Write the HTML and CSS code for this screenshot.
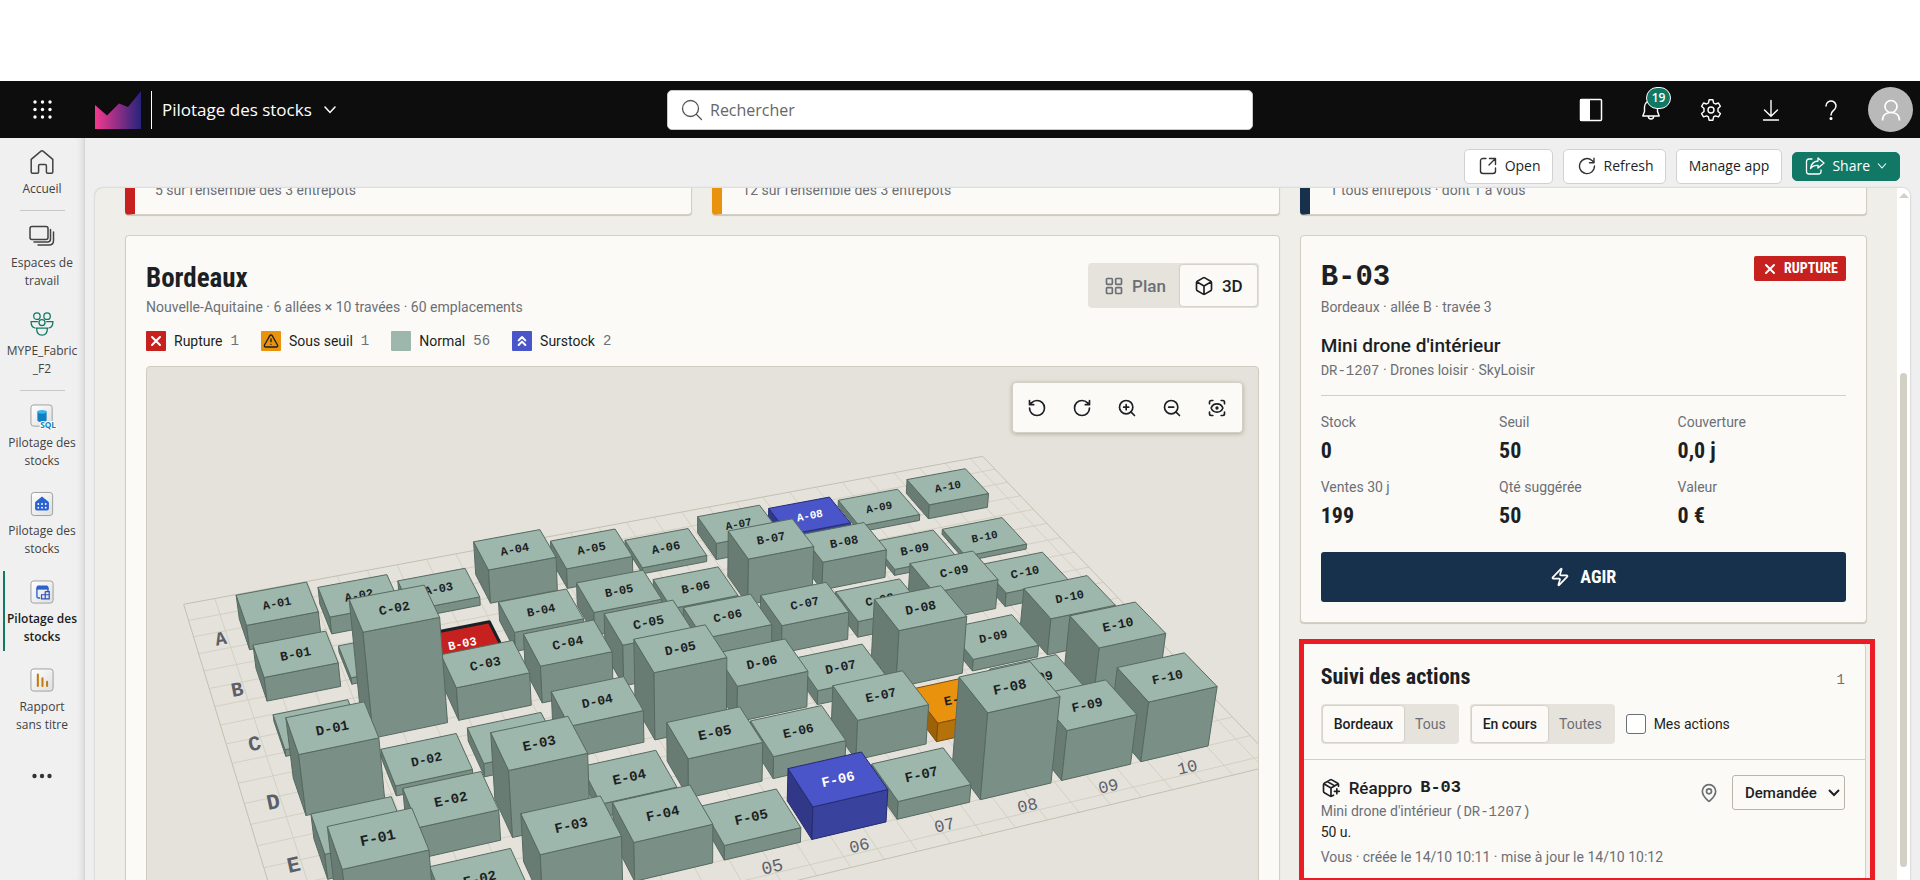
FILE: index.html
```html
<!DOCTYPE html>
<html lang="fr">
<head>
<meta charset="utf-8">
<title>Pilotage des stocks</title>
<link rel="stylesheet" href="styles.css">
</head>
<body>
<svg class="defs" aria-hidden="true">
  <defs>
    <linearGradient id="brand" x1="0" x2="1" y1="0" y2="0"><stop offset="0" stop-color="#f5398f"/><stop offset="1" stop-color="#26237c"/></linearGradient>
    <linearGradient id="tile" x1="0" x2="1" y1="0" y2="1"><stop offset="0" stop-color="#fff"/><stop offset="1" stop-color="#dedede"/></linearGradient>
  </defs>
</svg>
<header class="topbar">
  <button class="icon-btn waffle" aria-label="Applications">
    <svg width="20" height="20" viewBox="0 0 20 20" fill="#fff"><circle cx="2" cy="2" r="1.7"/><circle cx="9.5" cy="2" r="1.7"/><circle cx="17" cy="2" r="1.7"/><circle cx="2" cy="9.5" r="1.7"/><circle cx="9.5" cy="9.5" r="1.7"/><circle cx="17" cy="9.5" r="1.7"/><circle cx="2" cy="17" r="1.7"/><circle cx="9.5" cy="17" r="1.7"/><circle cx="17" cy="17" r="1.7"/></svg>
  </button>
  <svg class="brand" width="46" height="38" viewBox="0 0 46 38"><path fill="url(#brand)" d="M0 14 12 24.500 24 12.500 33 16 46 0V38H0Z"/></svg>
  <button class="app-name">Pilotage des stocks
    <svg width="12" height="8" viewBox="0 0 12 8" fill="none" stroke="#fff" stroke-width="1.500" stroke-linecap="round"><path d="m1 1 5 5.500L11 1"/></svg>
  </button>
  <label class="search">
    <svg width="22" height="22" viewBox="0 0 22 22" fill="none" stroke="#555" stroke-width="1.300" stroke-linecap="round"><circle cx="9.500" cy="9.500" r="8"/><path d="m15.500 15.500 5 5"/></svg>
    <input type="search" placeholder="Rechercher" aria-label="Rechercher">
  </label>
  <nav class="top-actions" aria-label="Outils">
    <button class="icon-btn" aria-label="Volet"><svg width="24" height="24" viewBox="0 0 24 24"><rect x="1.500" y="1.500" width="21" height="21" rx="1" fill="none" stroke="#fff" stroke-width="1.500"/><path fill="#fff" d="M1 1h10v22H1z"/></svg></button>
    <button class="icon-btn bell" aria-label="Notifications"><svg width="24" height="24" viewBox="0 0 24 24" fill="none" stroke="#fff" stroke-width="1.400" stroke-linejoin="round"><path d="M12 2.500a6.500 6.500 0 0 0-6.500 6.500v4.500L3.800 18h16.400l-1.700-4.500V9A6.500 6.500 0 0 0 12 2.500ZM9.300 18.300a2.700 2.700 0 0 0 5.400 0"/></svg><span class="count">19</span></button>
    <button class="icon-btn" aria-label="Paramètres"><svg width="24" height="24" viewBox="0 0 24 24" fill="none" stroke="#fff" stroke-width="1.400" stroke-linejoin="round"><circle cx="12" cy="12" r="3"/><path d="M10.100 1.800h3.800l.7 3.200 1.800 1 3.100-1 1.900 3.300-2.400 2.200v2.900l2.400 2.200-1.900 3.300-3.100-1-1.800 1-.7 3.300h-3.800l-.7-3.300-1.800-1-3.100 1-1.900-3.300L5 13.400v-2.900L2.600 8.300 4.500 5l3.100 1 1.800-1z"/></svg></button>
    <button class="icon-btn" aria-label="Télécharger"><svg width="24" height="24" viewBox="0 0 24 24" fill="none" stroke="#fff" stroke-width="1.400" stroke-linecap="round"><path d="M12 2.500v15.500M5.500 12l6.500 6.300 6.500-6.300M4.500 22h15"/></svg></button>
    <button class="icon-btn" aria-label="Aide"><svg width="24" height="24" viewBox="0 0 24 24" fill="none" stroke="#fff" stroke-width="1.500" stroke-linecap="round"><path d="M7 8a5 5 0 1 1 8.700 3.300C14 13 12 13.700 12 17"/><circle cx="12" cy="20.500" r=".8" fill="#fff"/></svg></button>
    <button class="avatar" aria-label="Compte"><svg width="24" height="24" viewBox="0 0 24 24" fill="none" stroke="#fff" stroke-width="1.700"><circle cx="12" cy="8.500" r="6"/><path d="M3.500 22.500c0-5.500 4-8 8.500-8s8.500 2.500 8.500 8"/></svg></button>
  </nav>
</header>
<div class="shell">
  <nav class="rail" aria-label="Navigation">
    <a href="#" class="rail-item"><svg width="24" height="24" viewBox="0 0 24 24" fill="none" stroke="#424242" stroke-width="1.500" stroke-linejoin="round"><path d="M1.200 9.300 11 1.200q1-.8 2 0l9.800 8.100V22q0 1.200-1.200 1.200h-4q-1.200 0-1.200-1.200v-6.300q0-1.200-1.200-1.200H9.800q-1.200 0-1.200 1.200V22q0 1.200-1.200 1.200h-5Q1.200 23.200 1.200 22Z"/></svg><span>Accueil</span></a>
    <hr>
    <a href="#" class="rail-item"><svg width="26" height="24" viewBox="0 0 26 24" fill="none" stroke="#424242" stroke-width="1.500" stroke-linecap="round"><rect x="1" y="2.500" width="18" height="13" rx="2"/><path d="M21.500 5.500V15q0 3-3 3H5M24.500 8v8.500q0 4.500-4.500 4.500H9"/></svg><span>Espaces de travail</span></a>
    <a href="#" class="rail-item"><svg width="26" height="26" viewBox="0 0 26 26" fill="none" stroke="#117865" stroke-width="1.400"><circle cx="7.500" cy="4.500" r="3.500"/><circle cx="18.500" cy="4.500" r="3.500"/><circle cx="13" cy="11.500" r="3.300"/><path d="M8.500 10.500H1.200c0 4 1.600 6.500 4.800 7M17.500 10.500h7.300c0 4-1.600 6.500-4.800 7M7.200 17.500h11.600c0 4.500-2.200 7.500-5.800 7.500s-5.800-3-5.800-7.500Z"/></svg><span>MYPE_Fabric _F2</span></a>
    <hr>
    <a href="#" class="rail-item"><svg width="28" height="26" viewBox="0 0 28 26"><rect x="2" y="1" width="23" height="23" rx="3" fill="url(#tile)" stroke="#9a9a9a"/><path fill="#0f7fc2" d="M9 8v9.500c0 2.700 10 2.700 10 0V8Z"/><ellipse cx="14" cy="8.500" rx="5" ry="2" fill="#35b5ea"/><text x="12" y="26" class="sql">SQL</text></svg><span>Pilotage des stocks</span></a>
    <a href="#" class="rail-item"><svg width="26" height="26" viewBox="0 0 26 26"><rect x="1.500" y=".5" width="23" height="25" rx="3" fill="url(#tile)" stroke="#9a9a9a"/><path fill="#2a62cf" d="m13 5 7 5.500q.5.500.5 1.500v6q0 2-2 2h-11q-2 0-2-2v-6q0-1 .5-1.500Z"/><g fill="#fff"><circle cx="9" cy="13" r="1"/><circle cx="13" cy="13" r="1"/><circle cx="17" cy="13" r="1"/><circle cx="9" cy="17" r="1"/><circle cx="13" cy="17" r="1"/><circle cx="17" cy="17" r="1"/></g></svg><span>Pilotage des stocks</span></a>
    <a href="#" class="rail-item current" aria-current="page"><svg width="26" height="26" viewBox="0 0 26 26" fill="none"><rect x="1" y="1" width="24" height="24" rx="3" fill="url(#tile)" stroke="#9a9a9a"/><path stroke="#2a62cf" stroke-width="1.500" d="M11 19.500H9q-1.500 0-1.500-1.500V9.500h12V12"/><path fill="#2a62cf" d="M7 10V8q0-2 2-2h9q2 0 2 2v2Z"/><path stroke="#2a52b8" stroke-width="1.300" d="M12.500 16h8.300v4.500h-8.300ZM16.500 12.500h4.300V16M16.500 12.500v8"/></svg><span>Pilotage des stocks</span></a>
    <a href="#" class="rail-item"><svg width="26" height="26" viewBox="0 0 26 26" fill="none"><rect x="1" y="1" width="24" height="24" rx="3" fill="url(#tile)" stroke="#9a9a9a"/><path stroke="#c27a0c" stroke-width="2.200" stroke-linecap="round" d="M8.500 7v12.500M13.500 11v8.500M18.500 15v4.500"/></svg><span class="narrow">Rapport sans titre</span></a>
    <button class="rail-more" aria-label="Plus"><svg width="20" height="6" viewBox="0 0 20 6" fill="#333"><circle cx="2.500" cy="3" r="2.200"/><circle cx="10" cy="3" r="2.200"/><circle cx="17.500" cy="3" r="2.200"/></svg></button>
  </nav>
  <div class="workspace">
    <div class="commands">
      <button class="cmd"><svg width="18" height="18" viewBox="0 0 18 18" fill="none" stroke="#333" stroke-width="1.400" stroke-linecap="round" stroke-linejoin="round"><path d="M7 1.500H4Q1.500 1.500 1.500 4v10q0 2.500 2.500 2.500h10q2.500 0 2.500-2.500v-3M10.500 1.500h6v6M16.500 1.500 10 8"/></svg>Open</button>
      <button class="cmd"><svg width="18" height="18" viewBox="0 0 18 18" fill="none" stroke="#333" stroke-width="1.400" stroke-linecap="round" stroke-linejoin="round"><path d="M16.500 9A7.500 7.500 0 1 1 14 3.500l2 2M16 1.200v4.500h-4.500"/></svg>Refresh</button>
      <button class="cmd">Manage app</button>
      <button class="cmd share"><svg width="20" height="18" viewBox="0 0 20 18" fill="none" stroke="#fff" stroke-width="1.300" stroke-linecap="round" stroke-linejoin="round"><path d="M7 2H4Q1.500 2 1.500 4.500v10Q1.500 17 4 17h9.500q2.500 0 2.500-2.500V13M13 1l6 5-6 5V8.300Q8 8 5.500 11.500 6.500 4.500 13 4Z"/></svg>Share<svg width="10" height="6" viewBox="0 0 10 6" fill="none" stroke="#fff" stroke-width="1.100"><path d="m1 .5 4 4.500L9 .5"/></svg></button>
    </div>
    <div class="frame">
      <main class="page">
        <section class="stats">
          <p class="card stat stat-red">5 sur l'ensemble des 3 entrepôts</p>
          <p class="card stat stat-amber">12 sur l'ensemble des 3 entrepôts</p>
          <p class="card stat stat-navy">1 tous entrepôts · dont 1 à vous</p>
        </section>
        <section class="board">
          <article class="card site">
            <header class="site-head">
              <div>
                <h2>Bordeaux</h2>
                <p class="muted">Nouvelle-Aquitaine · 6 allées × 10 travées · 60 emplacements</p>
              </div>
              <div class="segmented large">
                <button><svg class="lucide" viewBox="0 0 24 24"><rect x="3" y="3" width="7" height="7" rx="1"/><rect x="14" y="3" width="7" height="7" rx="1"/><rect x="14" y="14" width="7" height="7" rx="1"/><rect x="3" y="14" width="7" height="7" rx="1"/></svg>Plan</button>
                <button class="on" aria-pressed="true"><svg class="lucide" viewBox="0 0 24 24"><path d="M21 8a2 2 0 0 0-1-1.730l-7-4a2 2 0 0 0-2 0l-7 4A2 2 0 0 0 3 8v8a2 2 0 0 0 1 1.730l7 4a2 2 0 0 0 2 0l7-4A2 2 0 0 0 21 16ZM3.300 7l8.700 5 8.700-5M12 22V12"/></svg>3D</button>
              </div>
            </header>
            <ul class="legend">
              <li><i class="chip red"><svg class="lucide" viewBox="0 0 24 24"><path d="M18 6 6 18M6 6l12 12"/></svg></i>Rupture <b>1</b></li>
              <li><i class="chip amber"><svg class="lucide" viewBox="0 0 24 24"><path d="m21.730 18-8-14a2 2 0 0 0-3.480 0l-8 14A2 2 0 0 0 4 21h16a2 2 0 0 0 1.730-3ZM12 9v4M12 17h.01"/></svg></i>Sous seuil <b>1</b></li>
              <li><i class="chip sage"></i>Normal <b>56</b></li>
              <li><i class="chip blue"><svg class="lucide" viewBox="0 0 24 24"><path d="m17 11-5-5-5 5M17 18l-5-5-5 5"/></svg></i>Surstock <b>2</b></li>
            </ul>
            <div class="scene">
              <svg id="warehouse" viewBox="147 367 1112 620" preserveAspectRatio="xMidYMin slice" role="img" aria-label="Vue 3D de l'entrepôt de Bordeaux"></svg>
              <div class="scene-tools">
                <button aria-label="Pivoter à gauche"><svg class="lucide" viewBox="0 0 24 24"><path d="M3 12a9 9 0 1 0 9-9 9.750 9.750 0 0 0-6.740 2.740L3 8M3 3v5h5"/></svg></button>
                <button aria-label="Pivoter à droite"><svg class="lucide" viewBox="0 0 24 24"><path d="M21 12a9 9 0 1 1-9-9c2.520 0 4.930 1 6.740 2.740L21 8M21 3v5h-5"/></svg></button>
                <button aria-label="Zoom avant"><svg class="lucide" viewBox="0 0 24 24"><circle cx="11" cy="11" r="8"/><path d="m21 21-4.350-4.350M11 8v6M8 11h6"/></svg></button>
                <button aria-label="Zoom arrière"><svg class="lucide" viewBox="0 0 24 24"><circle cx="11" cy="11" r="8"/><path d="m21 21-4.350-4.350M8 11h6"/></svg></button>
                <button aria-label="Recentrer"><svg class="lucide" viewBox="0 0 24 24"><path d="M3 7V5a2 2 0 0 1 2-2h2M17 3h2a2 2 0 0 1 2 2v2M21 17v2a2 2 0 0 1-2 2h-2M7 21H5a2 2 0 0 1-2-2v-2"/><circle cx="12" cy="12" r="1"/><path d="M18.940 12.330a1 1 0 0 0 0-.660 7.500 7.500 0 0 0-13.880 0 1 1 0 0 0 0 .660 7.500 7.500 0 0 0 13.880 0"/></svg></button>
              </div>
            </div>
          </article>
          <aside class="side">
            <article class="card detail">
              <header class="detail-head">
                <h2 class="slot">B-03</h2>
                <span class="tag"><svg class="lucide" viewBox="0 0 24 24"><path d="M18 6 6 18M6 6l12 12"/></svg>RUPTURE</span>
              </header>
              <p class="muted">Bordeaux · allée B · travée 3</p>
              <h3>Mini drone d'intérieur</h3>
              <p class="muted"><span class="mono">DR-1207</span> · Drones loisir · SkyLoisir</p>
              <hr>
              <dl class="facts">
                <div><dt>Stock</dt><dd>0</dd></div>
                <div><dt>Seuil</dt><dd>50</dd></div>
                <div><dt>Couverture</dt><dd>0,0 j</dd></div>
                <div><dt>Ventes 30 j</dt><dd>199</dd></div>
                <div><dt>Qté suggérée</dt><dd>50</dd></div>
                <div><dt>Valeur</dt><dd>0 €</dd></div>
              </dl>
              <button class="primary"><svg class="lucide" viewBox="0 0 24 24"><path d="M4 14a1 1 0 0 1-.780-1.630l9.900-10.200a.5.5 0 0 1 .860.460l-1.920 6.020A1 1 0 0 0 13 10h7a1 1 0 0 1 .780 1.630l-9.900 10.200a.5.5 0 0 1-.860-.460l1.920-6.020A1 1 0 0 0 11 14z"/></svg>AGIR</button>
            </article>
            <div class="callout">
              <article class="actions">
                <header class="actions-head">
                  <h3>Suivi des actions</h3><span class="total mono">1</span>
                </header>
                <div class="filters">
                  <div class="segmented"><button class="on" aria-pressed="true">Bordeaux</button><button>Tous</button></div>
                  <div class="segmented"><button class="on" aria-pressed="true">En cours</button><button>Toutes</button></div>
                  <label class="mine"><input type="checkbox">Mes actions</label>
                </div>
                <div class="action">
                  <div class="action-text">
                    <h4><svg class="lucide" viewBox="0 0 24 24"><path d="M16 16h6M19 13v6M21 10V8a2 2 0 0 0-1-1.730l-7-4a2 2 0 0 0-2 0l-7 4A2 2 0 0 0 3 8v8a2 2 0 0 0 1 1.730l7 4a2 2 0 0 0 2 0l2-1.140M7.500 4.270l9 5.150M3.290 7 12 12l8.710-5M12 22V12"/></svg>Réappro <span class="mono">B-03</span></h4>
                    <p class="muted">Mini drone d'intérieur <span class="mono">(DR-1207)</span></p>
                    <p>50 u.</p>
                    <p class="muted when">Vous · créée le 14/10 10:11 · mise à jour le 14/10 10:12</p>
                  </div>
                  <button class="pin" aria-label="Localiser"><svg class="lucide" viewBox="0 0 24 24"><path d="M20 10c0 5-5.540 10.190-7.400 11.800a1 1 0 0 1-1.200 0C9.540 20.190 4 15 4 10a8 8 0 0 1 16 0"/><circle cx="12" cy="10" r="3"/></svg></button>
                  <div class="status">
                    <select aria-label="Statut"><option>Demandée</option></select>
                    <svg width="12" height="8" viewBox="0 0 12 8" fill="none" stroke="#1c1f24" stroke-width="2"><path d="m1 1 5 5 5-5"/></svg>
                  </div>
                </div>
              </article>
            </div>
          </aside>
        </section>
      </main>
      <div class="scrollbar" aria-hidden="true"><i class="arrow"></i><i class="thumb"></i></div>
    </div>
  </div>
</div>
<script src="scene.js"></script>
</body>
</html>
```

FILE: styles.css
```css
* { box-sizing: border-box; }
body {
  margin: 0;
  height: 100vh;
  padding-top: 81px;
  display: flex;
  flex-direction: column;
  overflow: hidden;
  background: #fff;
  color: #1c1f24;
  font: 14px/20px Roboto, "Liberation Sans", sans-serif;
}
h2, h3, h4, p, ul, dl, dd { margin: 0; padding: 0; }
button, input, select { font: inherit; color: inherit; }
button { border: 0; background: none; padding: 0; cursor: pointer; }
.defs { position: absolute; width: 0; height: 0; }
.lucide { width: 20px; height: 20px; fill: none; stroke: currentColor; stroke-width: 2; stroke-linecap: round; stroke-linejoin: round; flex: none; }
.mono { font-family: "Liberation Mono", monospace; }
.muted { color: #6b6f76; }

.topbar { height: 57px; flex: none; display: flex; align-items: center; background: #0d0d0d; color: #fff; font-family: "Open Sans", "Noto Sans", sans-serif; }
.icon-btn { display: grid; place-items: center; width: 60px; height: 57px; position: relative; }
.waffle { width: 85px; }
.brand { margin-left: 10px; }
.app-name { display: flex; align-items: center; gap: 12px; height: 38px; margin-left: 10px; padding-left: 10px; border-left: 1px solid #fff; font-size: 17px; white-space: nowrap; }
.search { display: flex; align-items: center; gap: 5px; width: 586px; height: 40px; margin: 0 auto; padding: 0 13px; background: #fff; border: 1px solid #c8c8c8; border-radius: 5px; position: absolute; left: 50%; translate: -50% 0; }
.search input { flex: 1; min-width: 0; border: 0; outline: 0; font-size: 16px; color: #333; background: none; }
.search input::placeholder { color: #666; opacity: 1; }
.top-actions { display: flex; align-items: center; margin-left: auto; padding-right: 7px; }
.count { position: absolute; left: 25px; top: 6px; width: 25px; height: 22px; border: 1px solid #fff; border-radius: 11px; background: #117865; font-size: 12px; font-weight: 600; line-height: 20px; text-align: center; }
.avatar { display: grid; place-items: center; width: 45px; height: 45px; margin-left: 7px; border-radius: 50%; background: #b9b9b9; }

.shell { flex: 1; min-height: 0; display: flex; background: #efefef; }
.rail { width: 85px; flex: none; display: flex; flex-direction: column; align-items: center; gap: 3px; padding-top: 2px; background: #f0f0f0; border-right: 1px solid #d5d5d5; box-shadow: inset -7px 0 6px -5px #d8d8d8; font: 12px/18px "Open Sans", "Noto Sans", sans-serif; color: #424242; }
.rail hr { width: 45px; margin: 0; border: 0; border-top: 1px solid #c8c8c8; }
.rail-item { width: 100%; display: flex; flex-direction: column; align-items: center; gap: 6px; padding: 10px 3px 9px; text-align: center; color: inherit; text-decoration: none; }
.rail-item svg { height: 24px; overflow: visible; }
.rail-item span { width: 76px; }
.rail-item .narrow { width: 60px; }
.current { position: relative; color: #1b1b1b; font-weight: 600; }
.current::before { content: ""; position: absolute; left: 3px; top: 1px; bottom: 4px; width: 2px; background: #117865; }
.sql { font: bold 9px "Open Sans", sans-serif; fill: #0f7fc2; paint-order: stroke; stroke: #fff; stroke-width: 2px; }
.rail-more { padding: 26px 0; line-height: 6px; }

.workspace { flex: 1; min-width: 0; display: flex; flex-direction: column; padding: 0 10px 0 10px; }
.commands { height: 50px; flex: none; display: flex; justify-content: flex-end; align-items: center; gap: 10px; padding: 6px 10px 0 0; font: 14px/20px "Open Sans", "Noto Sans", sans-serif; }
.cmd { display: flex; align-items: center; gap: 8px; height: 35px; padding: 0 11px 0 14px; background: #fff; border: 1px solid #d1d1d1; border-radius: 5px; white-space: nowrap; }
.cmd:nth-child(3) { padding: 0 12px; }
.share { height: 29px; gap: 7px; padding: 0 12px; background: #117865; border-color: #117865; color: #fff; }

.frame { flex: 1; min-height: 0; display: flex; overflow: hidden; background: #efeee9; border-radius: 8px 8px 0 0; box-shadow: 0 0 2px #aaa; }
.page { flex: 1; min-width: 0; padding: 0 30px; overflow: hidden; }
.scrollbar { width: 13px; flex: none; display: flex; flex-direction: column; align-items: center; background: #fff; }
.arrow { margin-top: 5px; border: 5px solid transparent; border-top: 0; border-bottom: 5px solid #d2cfc4; }
.thumb { width: 7px; flex: 1; margin: 175px 0 13px; border-radius: 4px; background: #d2cfc4; }

.card { background: #fbfaf6; border: 1px solid #d2cfc4; border-radius: 4px; box-shadow: 0 1px 1px #c9c6bb; }
.stats { display: grid; grid-template-columns: repeat(3, 1fr); gap: 20px; margin: -36px 0 20px; }
.stat { padding: 27px 20px 14px; border-left-width: 10px; color: #6b6f76; }
.stat-red { border-left-color: #c7211f; }
.stat-amber { border-left-color: #e9920d; }
.stat-navy { border-left-color: #17314c; }

.board { display: grid; grid-template-columns: repeat(3, 1fr); gap: 20px; align-items: start; }
.site { grid-column: span 2; padding: 20px; }
.site-head { display: flex; justify-content: space-between; align-items: center; }
h2 { font: bold 27px/36px "Liberation Sans Narrow", "Roboto Condensed", Roboto, sans-serif; }
.site h2 { padding-top: 4px; margin-bottom: 1px; }
.segmented { display: flex; padding: 2px; background: #e5e3db; border-radius: 4px; color: #6b6f76; }
.segmented button { padding: 0 11px; height: 36px; border-radius: 3px; }
.segmented .on { background: #fbfaf6; color: #1c1f24; box-shadow: 0 0 2px #a8a59a; }
.large { margin-bottom: 2px; font-size: 17px; font-weight: 500; }
.large button { display: flex; align-items: center; gap: 8px; height: 41px; padding: 0 14px; }
.legend { display: flex; gap: 22px; margin: 14px 0 15px; list-style: none; }
.legend li { display: flex; align-items: center; gap: 8px; }
.legend b { font: 14px/20px "Liberation Mono", monospace; color: #6b6f76; }
.chip { display: grid; place-items: center; width: 20px; height: 20px; border-radius: 1px; color: #fff; }
.chip .lucide { width: 16px; height: 16px; stroke-width: 3; }
.red { background: #c7211f; }
.amber { background: #e9920d; color: #1c1f24; }
.amber .lucide { stroke-width: 2; }
.sage { background: #9db7ac; }
.blue { background: #4955c8; }

.scene { position: relative; border: 1px solid #cfccbf; border-radius: 4px; overflow: hidden; background: #e5e2db; }
#warehouse { display: block; width: 100%; height: 620px; }
.scene-tools { position: absolute; top: 15px; right: 15px; display: flex; padding: 2px; background: #fbfaf6; border: 1px solid #d2cfc4; border-radius: 4px; box-shadow: 0 1px 4px #b0ada2; }
.scene-tools button { display: grid; place-items: center; width: 45px; height: 45px; }
.box { stroke-width: 1; stroke-linejoin: round; }
.selected { stroke-width: 3; }
.slot-name { font-family: "Liberation Mono", monospace; font-weight: bold; text-anchor: middle; dominant-baseline: central; }
.axis { font-family: "Liberation Mono", monospace; fill: #5b5f68; text-anchor: middle; dominant-baseline: central; }
.aisle { font-weight: bold; }
.grid { fill: none; stroke: #d3d0c2; stroke-width: 1; }
.edge { fill: none; stroke: #c3c0b1; stroke-width: 1; }

.side { display: flex; flex-direction: column; gap: 16px; }
.detail { padding: 20px; }
.detail-head { display: flex; justify-content: space-between; align-items: flex-start; }
.slot { padding-top: 3px; font: bold 29px/38px "Liberation Mono", monospace; }
.tag { display: flex; align-items: center; gap: 6px; height: 25px; padding: 0 8px; border-radius: 2px; background: #c7211f; color: #fff; font: bold 14px/25px "Liberation Sans Narrow", "Roboto Condensed", sans-serif; }
.tag .lucide { width: 16px; height: 16px; stroke-width: 3; }
.detail h3 { margin: 17px 0 2px; font: 500 19px/24px Roboto, sans-serif; }
.detail hr { margin: 14px 0 16px; border: 0; border-top: 1px solid #d2cfc4; }
.facts { display: grid; grid-template-columns: repeat(3, 1fr); gap: 10px; }
.facts dt { color: #6b6f76; }
.facts dd { padding-top: 3px; font: bold 22px/32px "Liberation Sans Narrow", "Roboto Condensed", sans-serif; }
.primary { display: flex; justify-content: center; align-items: center; gap: 10px; width: 100%; height: 50px; margin-top: 20px; border-radius: 3px; background: #17314c; color: #fff; font: bold 18px/24px "Liberation Sans Narrow", "Roboto Condensed", sans-serif; }

.callout { border: 5px solid #ec1c24; margin: 0 -8px 0 -1px; padding-right: 4px; }
.actions { background: #fbfaf6; border-right: 1px solid #d2cfc4; border-radius: 0 4px 0 0; }
.actions-head { display: flex; justify-content: space-between; align-items: center; padding: 18px 20px 0 17px; }
.actions-head h3 { font: bold 22px/30px "Liberation Sans Narrow", "Roboto Condensed", sans-serif; }
.total { padding-top: 6px; color: #6b6f76; }
.filters { display: flex; align-items: center; gap: 11px; padding: 12px 17px 15px; border-bottom: 1px solid #d2cfc4; }
.filters .segmented .on { font-weight: 500; }
.mine { display: flex; align-items: center; gap: 8px; }
.mine input { appearance: none; width: 20px; height: 20px; margin: 0; border: 1px solid #6b6f76; border-radius: 3px; background: #fff; }
.action { display: flex; align-items: flex-start; padding: 15px 20px 11px 17px; }
.action-text { flex: 1; }
.action h4 { display: flex; align-items: center; gap: 8px; font: 500 17px/26px Roboto, sans-serif; }
.action h4 .mono { font-weight: bold; }
.action .when { margin-top: 5px; }
.pin { padding: 8px 13px; color: #6b6f76; line-height: 0; }
.status { position: relative; }
.status select { appearance: none; width: 113px; height: 35px; padding: 0 12px; border: 1px solid #b9b6a9; border-radius: 3px; background: #fbfaf6; font-size: 15px; font-weight: 500; }
.status svg { position: absolute; right: 5px; top: 14px; pointer-events: none; }
```

FILE: scene.js
```js
// Pinhole camera: the floor spans u, v in 0..1 and z rises towards the viewer.
const CAMERA = { a: 915.8, b: 54.8, c: 184.3, d: -93.8, e: 180, f: 604.3, g: 0.1188, h: -0.2154 };
const UP = { k: 1 / 3400, x: 702, y: 4100 };

function project(u, v, z = 0) {
  const w = 1 + CAMERA.g * u + CAMERA.h * v - UP.k * z;
  return [
    (CAMERA.a * u + CAMERA.b * v + CAMERA.c - UP.k * UP.x * z) / w,
    (CAMERA.d * u + CAMERA.e * v + CAMERA.f - UP.k * UP.y * z) / w,
    w,
  ];
}

// Stack height of each bay, one row per aisle.
const HEIGHTS = {
  A: [23, 16, 8, 32, 19, 6, 16, 11, 6, 14],
  B: [22, 6, 1, 18, 22, 11, 44, 27, 6, 5],
  C: [6, 95, 30, 34, 38, 29, 26, 15, 28, 13],
  D: [54, 9, 12, 29, 61, 33, 13, 53, 11, 34],
  E: [22, 27, 59, 12, 35, 20, 36, 17, 20, 54],
  F: [67, 14, 42, 34, 13, 29, 16, 77, 45, 54],
};
const STATES = { 'B-03': 'rupture', 'E-08': 'low', 'A-08': 'over', 'F-06': 'over' };
const COLOURS = {
  normal: { top: '#9db7ac', front: '#7a8f86', left: '#697c74', line: '#566a61', ink: '#1c1f24' },
  rupture: { top: '#c7211f', front: '#9a1a18', left: '#861614', line: '#1c1f24', ink: '#fff' },
  low: { top: '#e9920d', front: '#b5710a', left: '#9d6208', line: '#7d4e06', ink: '#1c1f24' },
  over: { top: '#4955c8', front: '#39429c', left: '#303887', line: '#262c70', ink: '#fff' },
};
const SELECTED = 'B-03';
const FIRST_U = 0.0536, STEP_U = 0.0908, WIDTH = 0.0788;
const FIRST_V = 0.1705, STEP_V = 0.1507, DEPTH = 0.0945;

const svg = document.getElementById('warehouse');
function add(name, attrs, text) {
  const node = document.createElementNS('http://www.w3.org/2000/svg', name);
  for (const key in attrs) node.setAttribute(key, attrs[key]);
  if (text) node.textContent = text;
  svg.append(node);
}
const path = (...points) => 'M' + points.map(([x, y]) => `${x.toFixed(1)} ${y.toFixed(1)}`).join('L');

function label(cls, text, u, v, z, size, fill) {
  const [x, y, w] = project(u, v, z);
  const [x2, y2] = project(u + 0.02, v, z);
  const angle = Math.atan2(y2 - y, x2 - x) * 180 / Math.PI;
  const attrs = { class: cls, 'font-size': Math.round(size / w), transform: `translate(${x.toFixed(1)} ${y.toFixed(1)}) rotate(${angle.toFixed(1)})` };
  if (fill) attrs.fill = fill;
  add('text', attrs, text);
}

let lines = '';
for (let u = 0.0351; u < 1; u += 0.0351) lines += path(project(u, 0), project(u, 1));
for (let v = 0.0513; v < 1; v += 0.0513) lines += path(project(0, v), project(1, v));
add('path', { class: 'grid', d: lines });
add('path', { class: 'edge', d: path(project(0, 0), project(1, 0), project(1, 1), project(0, 1)) + 'Z' });

Object.keys(HEIGHTS).forEach((row, j) => {
  const front = FIRST_V + j * STEP_V, back = front - DEPTH;
  label('axis aisle', row, 0.0273, front - DEPTH / 2 + 0.003, 0, 19);
  for (let i = 9; i >= 0; i--) {
    const z = HEIGHTS[row][i];
    const name = `${row}-${String(i + 1).padStart(2, '0')}`;
    const left = FIRST_U + i * STEP_U, right = left + WIDTH;
    const c = COLOURS[STATES[name] || 'normal'];
    const fl = project(left, front, z), fr = project(right, front, z);
    const bl = project(left, back, z), br = project(right, back, z);
    add('path', { class: 'box', fill: c.left, stroke: c.line, d: path(bl, fl, project(left, front), project(left, back)) + 'Z' });
    add('path', { class: 'box', fill: c.front, stroke: c.line, d: path(fl, fr, project(right, front), project(left, front)) + 'Z' });
    add('path', { class: name === SELECTED ? 'box selected' : 'box', fill: c.top, stroke: c.line, d: path(bl, br, fr, fl) + 'Z' });
    if (name === SELECTED) {
      const m = (du, dv) => project(left + WIDTH * du, back + DEPTH * dv, z);
      add('path', { fill: '#fff', d: path(m(0.4, 0.75), m(0.6, 0.75), m(0.6, 0.85), m(0.4, 0.85)) + 'Z' });
    }
    label('slot-name', name, left + WIDTH / 2, back + DEPTH * 0.52, z, 12, c.ink);
  }
});
for (let i = 0; i < 10; i++) {
  label('axis', String(i + 1).padStart(2, '0'), FIRST_U + i * STEP_U + WIDTH / 2, 0.9617, 0, 15);
}
```
